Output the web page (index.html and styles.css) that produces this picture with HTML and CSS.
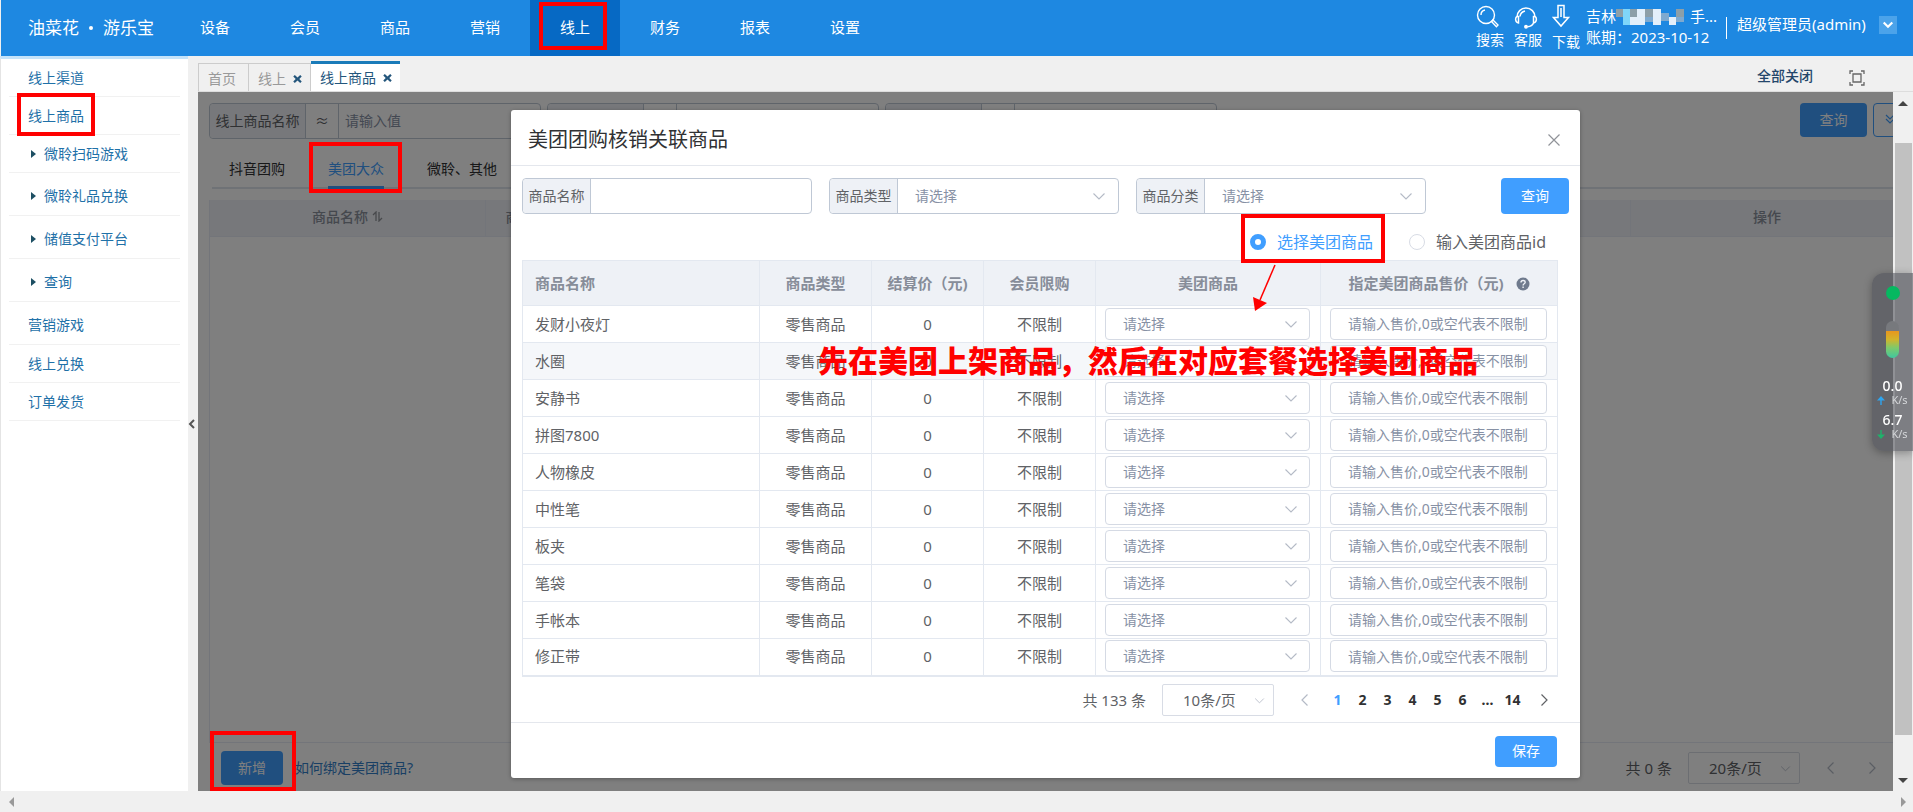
FILE: index.html
```html
<!DOCTYPE html>
<html lang="zh-CN">
<head>
<meta charset="utf-8">
<title>油菜花 · 游乐宝</title>
<link rel="stylesheet" href="styles.css">
</head>
<body>
<svg class="sprite" aria-hidden="true">
  <symbol id="down" viewBox="0 0 14 14"><path d="M1.5 4.5 7 10l5.500-5.500" fill="none" stroke="currentColor" stroke-width="1.1"/></symbol>
  <symbol id="left" viewBox="0 0 14 14"><path d="M9.500 1.500 4 7l5.500 5.500" fill="none" stroke="currentColor" stroke-width="1.2"/></symbol>
  <symbol id="right" viewBox="0 0 14 14"><path d="M4.500 1.500 10 7l-5.500 5.500" fill="none" stroke="currentColor" stroke-width="1.2"/></symbol>
  <symbol id="cross" viewBox="0 0 10 10"><path d="M2 .5l3 2.700L8 .5l1.700 1.800L7 5l2.700 2.700L8 9.500 5 6.800 2 9.500.3 7.700 3 5 .3 2.300z" fill="currentColor"/></symbol>
</svg>

<header class="topbar">
  <div class="logo"><span>油菜花</span><i></i><span>游乐宝</span></div>
  <nav class="nav">
    <a href="#">设备</a><a href="#">会员</a><a href="#">商品</a><a href="#">营销</a><a href="#" class="active">线上<i class="mark mark-nav"></i></a><a href="#">财务</a><a href="#">报表</a><a href="#">设置</a>
  </nav>
  <div class="tools">
    <a href="#" class="tool">
      <svg width="24" height="24" viewBox="0 0 24 24" fill="none" stroke="#fff" stroke-width="1.4"><circle cx="10" cy="10" r="8.500"/><path d="M5 10a5 5 0 0 1 4-5M15.500 16.500l1.500-1.500 5 5-1.600 1.800z"/></svg>
      <span>搜索</span>
    </a>
    <a href="#" class="tool">
      <svg width="24" height="24" viewBox="0 0 24 24" fill="none" stroke="#fff" stroke-width="1.500"><path d="M3 12a9 9 0 0 1 18 0M6 11.500a6.500 6.500 0 0 1 5-5.500M3 11.500c-2 1-2 6 1.500 6.500v-6.500zM21 11.500c2 1 2 6-1.500 6.500v-6.500zM19.500 18c-1 2.500-3 3.500-6 3.800"/><circle cx="12" cy="21.800" r="1.200" fill="#fff"/></svg>
      <span>客服</span>
    </a>
    <a href="#" class="tool tool-low">
      <svg width="20" height="24" viewBox="0 0 20 24" fill="none" stroke="#fff" stroke-width="1.500"><path d="M6 1.500h6v12h4.500L9 22 1.500 13.500H6zM9 4v9"/></svg>
      <span>下载</span>
    </a>
    <div class="shop">
      <div class="shop-name">吉林<svg width="74" height="16" viewBox="0 0 76 16" shape-rendering="crispEdges"><path fill="#8d9fa8" d="M0 0h7v8H0zM14 0h8v8h-8zM30 0h8v8h-8zM62 0h8v8h-8z"/><path fill="#7fd6fa" d="M7 0h7v16H7z"/><path fill="#e3effa" d="M14 8h8v8h-8zM22 0h8v16h-8zM38 0h8v16h-8zM54 8h8v8h-8z"/><path fill="#7ea9cf" d="M30 8h8v5h-8zM46 4h8v8h-8zM62 8h8v5h-8z"/></svg>手...</div>
      <div>账期：2023-10-12</div>
    </div>
    <div class="user">超级管理员(admin)</div>
    <button class="user-menu" aria-label="账号菜单"><svg width="12" height="12" viewBox="0 0 14 14"><path d="M2 4l5 5 5-5" fill="none" stroke="#fff" stroke-width="2.500"/></svg></button>
  </div>
</header>

<div class="frame">
  <aside class="sidebar">
    <ul>
      <li><a href="#">线上渠道</a></li>
      <li><a href="#">线上商品<i class="mark mark-side"></i></a></li>
      <li class="sub"><a href="#">微聆扫码游戏</a></li>
      <li class="sub tall"><a href="#">微聆礼品兑换</a></li>
      <li class="sub tall"><a href="#">储值支付平台</a></li>
      <li class="sub tall"><a href="#">查询</a></li>
      <li class="tall"><a href="#">营销游戏</a></li>
      <li><a href="#">线上兑换</a></li>
      <li><a href="#">订单发货</a></li>
    </ul>
  </aside>
  <div class="gutter"><svg width="8" height="10" viewBox="0 0 8 10"><path d="M6 1 2 5l4 4" fill="none" stroke="#555" stroke-width="2"/></svg></div>

  <div class="main">
    <div class="tabs">
      <a href="#" class="tab">首页</a>
      <a href="#" class="tab">线上<svg width="9" height="10"><use href="#cross"/></svg></a>
      <a href="#" class="tab current">线上商品<svg width="9" height="10"><use href="#cross"/></svg></a>
      <a href="#" class="close-all">全部关闭</a>
      <svg class="full" width="16" height="16" viewBox="0 0 16 16" fill="none" stroke="#666" stroke-width="1.300"><path d="M1 4V1h3M12 1h3v3M15 12v3h-3M4 15H1v-3M4 4h8v8H4z"/></svg>
    </div>

    <div class="view">
      <div class="page">
        <div class="search">
          <div class="group"><label for="q1" class="wide">线上商品名称</label><span>≈</span><input id="q1" placeholder="请输入值"></div>
          <div class="group"><label for="q2" class="wide">商品编码</label><span>≈</span><input id="q2"></div>
          <div class="group"><label for="q3" class="wide">商品名称</label><span>≈</span><input id="q3"></div>
          <button class="btn search-btn">查询</button>
          <button class="btn more" aria-label="展开"><svg width="12" height="12" viewBox="0 0 12 12"><path d="M2 2l4 4 4-4M2 6l4 4 4-4" fill="none" stroke="#409eff" stroke-width="1.200"/></svg></button>
        </div>
        <div class="kinds">
          <a href="#">抖音团购</a><a href="#" class="on">美团大众<i class="mark mark-kind"></i></a><a href="#">微聆、其他</a>
        </div>
        <div class="list">
          <table>
            <colgroup><col class="l1"><col><col class="l3"></colgroup>
            <tr><th>商品名称 <svg width="11" height="11" viewBox="0 0 11 11"><path d="M1 4l3-3v9M7 1v9l3-3" fill="none" stroke="#909399" stroke-width="1.300"/></svg></th><th class="start">商品类型</th><th>操作</th></tr>
          </table>
        </div>
        <div class="bottom">
          <div class="add"><button class="btn">新增</button><i class="mark mark-add"></i></div>
          <a href="#">如何绑定美团商品?</a>
          <div class="pager">
            <span>共 0 条</span>
            <div class="size"><select aria-label="每页条数"><option>20条/页</option></select><svg width="11" height="11"><use href="#down"/></svg></div>
            <button class="step" aria-label="上一页"><svg width="14" height="14"><use href="#left"/></svg></button>
            <button class="step far" aria-label="下一页"><svg width="14" height="14"><use href="#right"/></svg></button>
          </div>
        </div>
      </div>

      <div class="mask">
        <section class="modal" role="dialog" aria-label="美团团购核销关联商品">
          <div class="modal-head"><h2>美团团购核销关联商品</h2><button aria-label="关闭"><svg width="14" height="14" viewBox="0 0 14 14"><path d="M1.500 1.500l11 11M12.500 1.500l-11 11" stroke="#909399" stroke-width="1.200"/></svg></button></div>
          <div class="modal-body">
            <div class="filters">
              <div class="group"><label for="f1">商品名称</label><input id="f1"></div>
              <div class="group"><label for="f2">商品类型</label><select id="f2"><option>请选择</option></select><svg width="14" height="14"><use href="#down"/></svg></div>
              <div class="group"><label for="f3">商品分类</label><select id="f3"><option>请选择</option></select><svg width="14" height="14"><use href="#down"/></svg></div>
              <button class="btn">查询</button>
            </div>
            <div class="modes">
              <label class="picked"><input type="radio" name="mode" checked>选择美团商品<i class="mark mark-mode"></i><svg class="arrow" width="32" height="48" viewBox="0 0 32 48"><path d="M26 1 11 36" stroke="#f00" stroke-width="1.500"/><path d="M4 33 18 39 6 47z" fill="#f00"/></svg></label>
              <label><input type="radio" name="mode">输入美团商品id</label>
            </div>
            <div class="goods-wrap">
            <table class="goods">
              <colgroup><col class="c1"><col class="c2"><col class="c2"><col class="c2"><col class="c5"><col class="c6"></colgroup>
              <thead><tr><th>商品名称</th><th>商品类型</th><th>结算价（元)</th><th>会员限购</th><th>美团商品</th><th>指定美团商品售价（元)<svg class="help" width="14" height="14" viewBox="0 0 14 14"><circle cx="7" cy="7" r="6.500" fill="#6f7a8d"/><path d="M5 5.500c0-2.800 4.200-2.600 4.200-.2C9.200 6.800 7.100 6.800 7.100 8.400M7.100 9.600v1.400" fill="none" stroke="#eef1f6" stroke-width="1.400"/></svg></th></tr></thead>
              <tbody>
              <tr><td>发财小夜灯</td><td>零售商品</td><td>0</td><td>不限制</td><td><div class="pick"><select aria-label="美团商品"><option>请选择</option></select><svg width="14" height="14"><use href="#down"/></svg></div></td><td><input aria-label="售价" placeholder="请输入售价,0或空代表不限制"></td></tr>
              <tr class="hover"><td>水圈</td><td>零售商品</td><td>0</td><td>不限制</td><td><div class="pick"><select aria-label="美团商品"><option>请选择</option></select><svg width="14" height="14"><use href="#down"/></svg></div></td><td><input aria-label="售价" placeholder="请输入售价,0或空代表不限制"></td></tr>
              <tr><td>安静书</td><td>零售商品</td><td>0</td><td>不限制</td><td><div class="pick"><select aria-label="美团商品"><option>请选择</option></select><svg width="14" height="14"><use href="#down"/></svg></div></td><td><input aria-label="售价" placeholder="请输入售价,0或空代表不限制"></td></tr>
              <tr><td>拼图7800</td><td>零售商品</td><td>0</td><td>不限制</td><td><div class="pick"><select aria-label="美团商品"><option>请选择</option></select><svg width="14" height="14"><use href="#down"/></svg></div></td><td><input aria-label="售价" placeholder="请输入售价,0或空代表不限制"></td></tr>
              <tr><td>人物橡皮</td><td>零售商品</td><td>0</td><td>不限制</td><td><div class="pick"><select aria-label="美团商品"><option>请选择</option></select><svg width="14" height="14"><use href="#down"/></svg></div></td><td><input aria-label="售价" placeholder="请输入售价,0或空代表不限制"></td></tr>
              <tr><td>中性笔</td><td>零售商品</td><td>0</td><td>不限制</td><td><div class="pick"><select aria-label="美团商品"><option>请选择</option></select><svg width="14" height="14"><use href="#down"/></svg></div></td><td><input aria-label="售价" placeholder="请输入售价,0或空代表不限制"></td></tr>
              <tr><td>板夹</td><td>零售商品</td><td>0</td><td>不限制</td><td><div class="pick"><select aria-label="美团商品"><option>请选择</option></select><svg width="14" height="14"><use href="#down"/></svg></div></td><td><input aria-label="售价" placeholder="请输入售价,0或空代表不限制"></td></tr>
              <tr><td>笔袋</td><td>零售商品</td><td>0</td><td>不限制</td><td><div class="pick"><select aria-label="美团商品"><option>请选择</option></select><svg width="14" height="14"><use href="#down"/></svg></div></td><td><input aria-label="售价" placeholder="请输入售价,0或空代表不限制"></td></tr>
              <tr><td>手帐本</td><td>零售商品</td><td>0</td><td>不限制</td><td><div class="pick"><select aria-label="美团商品"><option>请选择</option></select><svg width="14" height="14"><use href="#down"/></svg></div></td><td><input aria-label="售价" placeholder="请输入售价,0或空代表不限制"></td></tr>
              <tr><td>修正带</td><td>零售商品</td><td>0</td><td>不限制</td><td><div class="pick"><select aria-label="美团商品"><option>请选择</option></select><svg width="14" height="14"><use href="#down"/></svg></div></td><td><input aria-label="售价" placeholder="请输入售价,0或空代表不限制"></td></tr>
              </tbody>
            </table>
            <p class="note">先在美团上架商品，然后在对应套餐选择美团商品</p>
            </div>
            <div class="pager">
              <span>共 133 条</span>
              <div class="size"><select aria-label="每页条数"><option>10条/页</option></select><svg width="11" height="11"><use href="#down"/></svg></div>
              <button class="step" aria-label="上一页"><svg width="14" height="14"><use href="#left"/></svg></button>
              <div class="nums"><a href="#" class="on">1</a><a href="#">2</a><a href="#">3</a><a href="#">4</a><a href="#">5</a><a href="#">6</a><a href="#">...</a><a href="#">14</a></div>
              <button class="step next" aria-label="下一页"><svg width="14" height="14"><use href="#right"/></svg></button>
            </div>
          </div>
          <div class="modal-foot"><button class="btn">保存</button></div>
        </section>
      </div>

      <div class="vbar"><i class="tri up"></i><i class="thumb"></i><i class="tri down"></i></div>
    </div>
  </div>
</div>
<div class="hbar"><i class="tri prev"></i><i class="tri fwd"></i></div>

<div class="monitor">
  <i class="dot"></i>
  <i class="level"></i>
  <div class="speed"><b>0.0</b><span><svg width="8" height="9" viewBox="0 0 8 9"><path d="M4 0l4 4.500H4.700V9H3.300V4.500H0z" fill="#2fa4ee"/></svg>K/s</span></div>
  <div class="speed"><b>6.7</b><span><svg width="8" height="9" viewBox="0 0 8 9"><path d="M4 9l4-4.500H4.700V0H3.300v4.500H0z" fill="#1fb26b"/></svg>K/s</span></div>
</div>
</body>
</html>
```
FILE: styles.css
```css
* { box-sizing: border-box; }
body {
  margin: 0;
  min-height: 100vh;
  display: flex;
  flex-direction: column;
  overflow: hidden;
  background: #f0f0f0;
  color: #606266;
  font: 14px/20px "Noto Sans", "Noto Sans CJK SC", sans-serif;
}
a { color: inherit; text-decoration: none; }
button, input, select { font: inherit; color: inherit; margin: 0; }
button { border: 0; background: none; padding: 0; }
input, select { appearance: none; border: 0; outline: 0; background: none; min-width: 0; padding: 0; }
input::placeholder { color: #8791a5; opacity: 1; }
svg { flex: none; }
.sprite { position: absolute; width: 0; height: 0; }

/* top bar */
.topbar { display: flex; height: 56px; background: #1e88e1; color: #fff; font-size: 15px; margin-left: 1px; }
.logo { display: flex; align-items: center; gap: 10px; width: 169px; padding-left: 27px; line-height: 56px; font-size: 17px; white-space: nowrap; }
.logo i { width: 4px; height: 4px; border-radius: 50%; background: #fff; }
.nav { display: flex; }
.nav a { position: relative; width: 90px; line-height: 54px; text-align: center; }
.nav .active { background: #0669c4; }
.tools { display: flex; margin-left: auto; padding-right: 16px; }
.tool { width: 38px; padding-top: 5px; font-size: 14px; display: flex; flex-direction: column; }
.tool span { line-height: 22px; }
.tool-low { width: 34px; padding-top: 4px; }
.tool-low span { line-height: 28px; }
.shop { padding: 6px 0; line-height: 21px; width: 140px; white-space: nowrap; }
.shop-name { display: flex; align-items: center; }
.user { position: relative; padding-left: 11px; line-height: 48px; width: 153px; }
.user::before { content: ""; position: absolute; left: 0; top: 17px; height: 22px; border-left: 1px solid #fff; }
.user-menu { width: 18px; height: 18px; margin-top: 16px; background: #4ba3ea; display: grid; place-items: center; }

/* frame */
.frame { flex: 1; display: flex; }
.sidebar { width: 188px; background: #fff; border-top: 3px solid #c4e3fa; border-left: 1px solid #e4e4e4; }
.sidebar ul { list-style: none; margin: 0; padding: 0 8px; }
.sidebar li { border-bottom: 1px solid #f1f1f1; padding-left: 19px; line-height: 37px; color: #1f71a8; }
.sidebar li a { position: relative; }
.sidebar .tall { padding-top: 4px; line-height: 38px; }
.sidebar .sub { display: flex; align-items: center; gap: 8px; padding-left: 22px; }
.sidebar .sub::before { content: ""; border-left: 5px solid #1d4f63; border-top: 4px solid transparent; border-bottom: 4px solid transparent; }
.gutter { width: 10px; display: flex; align-items: center; }
.main { flex: 1; min-width: 0; display: flex; flex-direction: column; }

/* window tabs */
.tabs { display: flex; height: 36px; align-items: flex-end; border-bottom: 1px solid #ddd; padding-right: 48px; }
.tab { display: flex; align-items: center; gap: 7px; height: 28px; padding: 2px 8px 0 9px; border: 1px solid #ccc; border-bottom: 0; color: #999; white-space: nowrap; }
.tab + .tab { border-left: 0; }
.tab:first-child { padding-right: 12px; }
.tab svg { color: #24567c; }
.tab.current { height: 30px; border: 0; border-top: 3px solid #1a7bb9; background: #fff; color: #24567c; padding-top: 1px; }
.close-all { margin-left: auto; line-height: 30px; color: #24466b; font-weight: 500; }
.full { margin: 0 0 5px 36px; }

/* underlying page */
.view { flex: 1; position: relative; display: flex; }
.page { flex: 1; min-width: 0; display: flex; flex-direction: column; background: #fff; padding: 11px 0 5px 11px; overflow: hidden; }
.search { display: flex; gap: 6px; }
.group { position: relative; display: flex; height: 36px; border: 1px solid #bfc8d5; border-radius: 4px; }
.search .group { width: 332px; flex: none; }
.group label { background: #eef1f6; border-right: 1px solid #bfc8d5; border-radius: 4px 0 0 4px; width: 68px; line-height: 33px; text-align: center; white-space: nowrap; }
.group label.wide { width: 96px; }
.group span { width: 33px; line-height: 34px; text-align: center; border-right: 1px solid #bfc8d5; }
.group input { flex: 1; padding: 0 6px; }
.group select { flex: 1; padding: 0 17px; color: #8791a5; }
.group svg, .pick svg { position: absolute; right: 12px; top: 50%; margin-top: -7px; color: #b4bac6; pointer-events: none; }
.btn { background: #409eff; color: #fff; border-radius: 4px; height: 34px; width: 67px; white-space: nowrap; }
.search-btn { margin-left: auto; }
.more { flex: none; width: 40px; margin-right: -20px; border: 1px solid #409eff; background: #fff; text-align: left; padding-left: 10px; }
.kinds { display: flex; gap: 43px; margin: 11px 0 0 3px; padding-left: 17px; border-bottom: 2px solid #dfe4ed; color: #303133; }
.kinds a { position: relative; line-height: 38px; height: 39px; margin-bottom: -2px; }
.kinds .on { color: #409eff; border-bottom: 3px solid #409eff; }
.list { flex: 1; margin: 11px -11px 0 0; border: 1px solid #e6ebf5; border-width: 0 0 1px 1px; }
.list table { width: 100%; border-collapse: collapse; table-layout: fixed; }
.list th { height: 36px; padding: 0 0 2px; background: #eef1f6; color: #8a909c; font-weight: 500; border-right: 1px solid #e6ebf5; border-bottom: 1px solid #e6ebf5; }
.list th.start { text-align: left; padding-left: 20px; }
.l1 { width: 275px; }
.l3 { width: 273px; }
.bottom { display: flex; align-items: center; height: 43px; padding-top: 6px; color: #337ec9; }
.add { position: relative; margin: 0 12px; }
.add .btn { width: 62px; display: block; }
.bottom .pager { margin-left: auto; color: #606266; padding-right: 12px; }

/* dialog */
.mask { position: absolute; inset: 0 20px 0 0; background: rgba(0, 0, 0, .5); z-index: 2; padding-top: 18px; }
.modal { width: 90%; max-width: 1069px; margin: 0 auto; background: #fff; border-radius: 3px; box-shadow: 0 1px 4px rgba(0, 0, 0, .3); }
.modal-head { display: flex; justify-content: space-between; align-items: center; height: 56px; padding: 5px 19px 0 17px; border-bottom: 1px solid #e4e7ed; }
.modal-head h2 { margin: 0; font-size: 20px; line-height: 28px; font-weight: 400; color: #303133; }
.modal-head button { display: flex; }
.modal-body { padding: 12px 11px 6px; }
.filters { display: flex; gap: 17px; }
.filters .group { width: 290px; }
.filters .btn { width: 68px; height: 36px; margin-left: auto; }
.modes { display: flex; justify-content: flex-end; gap: 36px; height: 46px; padding: 7px 23px 0 0; font-size: 16px; line-height: 42px; }
.modes label { position: relative; display: flex; align-items: center; gap: 11px; height: 42px; }
.modes .picked { color: #409eff; }
.modes input { width: 16px; height: 16px; border: 1px solid #d8dce5; border-radius: 50%; background: #fff; }
.modes input:checked { border: 5px solid #409eff; }
.arrow { position: absolute; left: -1px; top: 43px; z-index: 4; }
.goods-wrap { position: relative; margin-right: 11px; }
.goods { width: 100%; border-collapse: collapse; table-layout: fixed; font-size: 15px; border: 1px solid #e3e8f0; border-bottom: 2px solid #e3e8f0; }
.goods th, .goods td { padding: 0; text-align: center; border: 1px solid #e3e8f0; white-space: nowrap; }
.goods th { height: 45px; background: #eef1f6; color: #878d99; font-weight: 700; }
.goods td { height: 37px; padding-bottom: 1px; }
.goods th:first-child, .goods td:first-child { text-align: left; padding-left: 12px; }
.hover { background: #f5f7fa; }
.c1 { width: 237px; }
.c2 { width: 112px; }
.c5 { width: 225px; }
.help { margin-left: 12px; vertical-align: -2px; }
.pick { position: relative; margin: 0 10px 0 9px; }
.pick select, .goods input { display: block; height: 32px; border: 1px solid #d5dae4; border-radius: 4px; padding: 0 17px; font-size: 14px; line-height: 30px; background: #fff; color: #8791a5; }
.pick select { width: 100%; }
.goods input { width: calc(100% - 19px); margin-left: 9px; }
.note { position: absolute; left: 296px; top: 79px; margin: 0; font-size: 30px; line-height: 40px; font-weight: 900; color: #f00; white-space: nowrap; z-index: 3; font-family: "Noto Sans CJK SC", sans-serif; }
.pager { display: flex; align-items: center; justify-content: flex-end; font-size: 15px; }
.modal .pager { padding: 7px 16px 0 0; }
.size { position: relative; margin: 0 24px 0 16px; width: 112px; height: 32px; border: 1px solid #d8dce5; border-radius: 2px; }
.size select { width: 100%; height: 30px; padding-left: 20px; }
.size svg { position: absolute; right: 8px; top: 10px; color: #b4bac6; }
.step { display: flex; width: 16px; color: #b4bac6; }
.next { color: #606266; }
.far { margin-left: 25px; }
.nums { display: flex; margin: 0 12px 0 11px; font-size: 14px; font-weight: 700; color: #303133; }
.nums a { width: 25px; text-align: center; }
.nums .on { color: #409eff; }
.modal-foot { border-top: 1px solid #e4e7ed; padding: 13px 23px 11px; display: flex; justify-content: flex-end; }
.modal-foot .btn { width: 62px; height: 31px; }

/* scrollbars */
.vbar { width: 20px; display: flex; flex-direction: column; align-items: center; padding: 9px 0 8px; background: #f0f0f0; }
.thumb { flex: 1; width: 17px; margin: 37px 0 43px; background: #c1c1c1; }
.tri { border: 5px solid transparent; }
.up { border-bottom-color: #444; border-top: 0; }
.down { border-top-color: #444; border-bottom: 0; }
.hbar { height: 21px; display: flex; justify-content: space-between; align-items: center; padding: 0 7px 0 9px; }
.prev { border-right-color: #999; border-left: 0; }
.fwd { border-left-color: #999; border-right: 0; }

/* highlight frames */
.mark { position: absolute; z-index: 3; border: 4px solid #f00; pointer-events: none; }
.mark-nav { inset: 2px 13px 6px 9px; }
.mark-side { inset: -13px -11px -11px -11px; }
.mark-kind { inset: -8px -18px -7px -19px; }
.mark-add { inset: -20px -13px -6px -11px; }
.mark-mode { inset: -7px -12px 0 -9px; }

/* network monitor */
.monitor { position: fixed; right: 0; top: 273px; z-index: 5; width: 41px; height: 178px; padding-top: 13px; display: flex; flex-direction: column; align-items: center; border-radius: 12px 0 0 12px; background: rgba(80, 82, 90, .6); box-shadow: 0 2px 8px rgba(0, 0, 0, .3); color: #fff; }
.dot { width: 14px; height: 14px; border-radius: 50%; background: #06b860; }
.level { width: 13px; height: 37px; margin: 21px 0 19px; border-radius: 7px; background: linear-gradient(#77797d 27%, #e8961e 27%, #d2b42b 50%, #7fc96a 72%, #3fc7a0); }
.speed { height: 34px; text-align: center; }
.speed b { display: block; font-size: 14px; line-height: 18px; font-weight: 500; }
.speed span { display: flex; align-items: center; gap: 6px; font-size: 11px; line-height: 10px; color: #d5d7da; }
```
